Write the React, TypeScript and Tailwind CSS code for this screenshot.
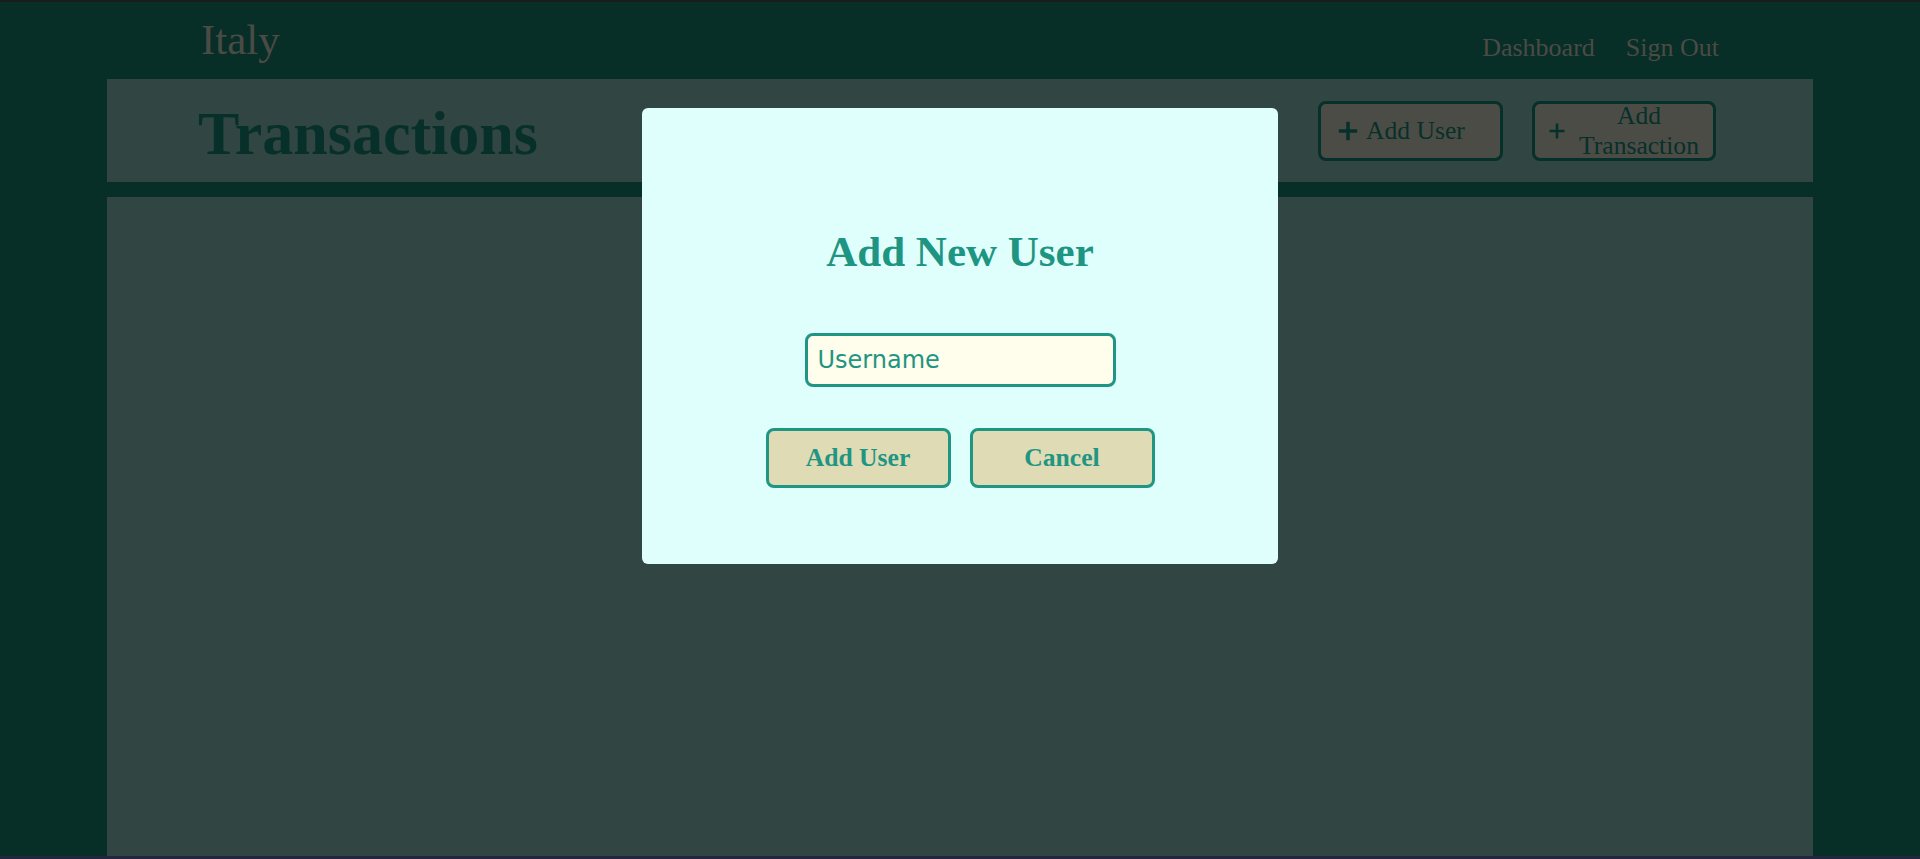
import { useState } from 'react'

const serif = "font-['Liberation_Serif','Times_New_Roman',serif]"

function PlusIcon({ size, stroke }: { size: number; stroke: number }) {
  return (
    <svg width={size} height={size} viewBox="0 0 24 24" className="shrink-0">
      <path d="M12 2v20M2 12h20" stroke="#07302a" strokeWidth={stroke} fill="none" />
    </svg>
  )
}

export default function App() {
  const [username, setUsername] = useState('')

  return (
    <div className={`relative flex h-[859px] w-full flex-col overflow-hidden border-t-2 border-b-[3px] border-t-[#1b1b1b] border-b-[#24263f] bg-[#082e28] ${serif}`}>
      {/* top nav */}
      <header className="flex h-[77px] shrink-0 items-start justify-between px-[201px]">
        <span className="mt-[14px] text-[43px] leading-[48px] text-[#4b4b45]">Italy</span>
        <nav className="mt-[31px] flex gap-[31px] text-[26px] leading-[29px] text-[#4b4b45]">
          <a>Dashboard</a>
          <a>Sign Out</a>
        </nav>
      </header>

      {/* title bar */}
      <div className="mx-[107px] flex h-[103px] shrink-0 items-center justify-between bg-[#314542] pl-[91px] pr-[97px]">
        <h1 className="mt-[4px] text-[62px] font-bold leading-[68px] text-[#07302a]">Transactions</h1>
        <div className="flex gap-[29px]">
          <button className="flex h-[60px] w-[185px] items-center gap-[7px] rounded-[8px] border-[3px] border-[#06302a] bg-[#4b4c46] pl-[16px] text-[25.6px] leading-[30px] text-[#07302a]">
            <PlusIcon size={22} stroke={3.8} />
            <span>Add User</span>
          </button>
          <button className="flex h-[60px] w-[184px] items-center gap-[7px] rounded-[8px] border-[3px] border-[#06302a] bg-[#4b4c46] pl-[13px] pr-[8px] text-[25.6px] leading-[30px] text-[#07302a]">
            <PlusIcon size={18} stroke={3.4} />
            <span className="flex-1 text-center">Add Transaction</span>
          </button>
        </div>
      </div>

      {/* content area */}
      <div className="mx-[107px] mt-[15px] flex-1 bg-[#314542]" />

      {/* modal */}
      <div className="absolute inset-x-0 top-[106px] flex justify-center">
        <div className="flex h-[456px] w-[636px] flex-col items-center rounded-[6px] bg-[#dffffd] pt-[120px]">
          <h2 className="text-[43px] font-bold leading-[48px] text-[#1e9582]">Add New User</h2>
          <input
            value={username}
            onChange={(e) => setUsername(e.target.value)}
            placeholder="Username"
            className="mt-[57px] h-[54px] w-[311px] rounded-[8px] border-[3px] border-[#1f9583] bg-[#fffdeb] pl-[10px] font-['DejaVu_Sans',sans-serif] text-[24px] text-[#1f9583] outline-none placeholder:text-[#1f9583]"
          />
          <div className="mt-[41px] flex gap-[19px]">
            <button className="h-[60px] w-[185px] rounded-[8px] border-[3px] border-[#1f9583] bg-[#dfdbb4] text-[25.6px] font-bold text-[#1f9583]">
              Add User
            </button>
            <button className="h-[60px] w-[185px] rounded-[8px] border-[3px] border-[#1f9583] bg-[#dfdbb4] text-[25.6px] font-bold text-[#1f9583]">
              Cancel
            </button>
          </div>
        </div>
      </div>
    </div>
  )
}
